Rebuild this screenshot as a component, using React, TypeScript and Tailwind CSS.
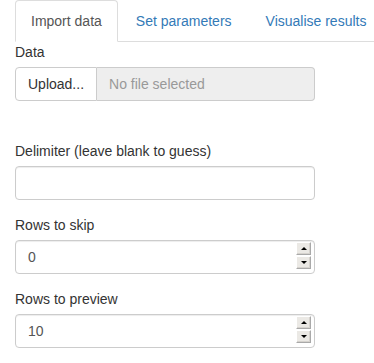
const font = { fontFamily: '"Liberation Sans", Arial, sans-serif' };

function Spinner() {
  return (
    <div className="absolute right-[3px] top-[1px] flex flex-col gap-px">
      <div className="flex h-[13px] w-[15px] items-center justify-center border border-[#a9a9a9] border-l-white border-t-white bg-[#ebe9e5] shadow-[inset_-1px_-1px_0_#d6d3ce]">
        <span className="block h-0 w-0 border-x-[3px] border-b-[3px] border-x-transparent border-b-black" />
      </div>
      <div className="flex h-[13px] w-[15px] items-center justify-center border border-[#a9a9a9] border-l-white border-t-white bg-[#ebe9e5] shadow-[inset_-1px_-1px_0_#d6d3ce]">
        <span className="block h-0 w-0 border-x-[3px] border-t-[3px] border-x-transparent border-t-black" />
      </div>
    </div>
  );
}

function Field({ label, value, number }: { label: string; value?: string; number?: boolean }) {
  return (
    <div className="mb-[15px]">
      <div className="mb-[5px] text-[14px] leading-[20px] text-[#333]">{label}</div>
      <div className="relative h-[34px] w-[300px] rounded-[4px] border border-[#ccc] bg-white px-[12px] py-[6px] text-[14px] leading-[20px] text-[#555] shadow-[inset_0_1px_1px_rgba(0,0,0,0.075)]">
        {value}
        {number && <Spinner />}
      </div>
    </div>
  );
}

export default function App() {
  return (
    <div className="h-[363px] w-[374px] overflow-hidden bg-white pl-[15px]" style={font}>
      <div className="flex border-b border-[#ddd] text-[14px] leading-[20px] whitespace-nowrap">
        <div className="-mb-px mr-[2px] shrink-0 rounded-t-[4px] border border-[#ddd] border-b-transparent bg-white px-[15px] py-[10px] text-[#555]">
          Import data
        </div>
        <div className="-mb-px mr-[2px] shrink-0 border border-transparent px-[15px] py-[10px] text-[#337ab7]">
          Set parameters
        </div>
        <div className="-mb-px shrink-0 border border-transparent px-[15px] py-[10px] text-[#337ab7]">
          Visualise results
        </div>
      </div>

      <div className="mb-[40px]">
        <div className="mb-[5px] text-[14px] leading-[20px] text-[#333]">Data</div>
        <div className="flex h-[34px] w-[300px] text-[14px] leading-[20px]">
          <div className="rounded-l-[4px] border border-[#ccc] bg-white px-[12px] py-[6px] text-[#333]">
            Upload...
          </div>
          <div className="flex-1 rounded-r-[4px] border border-l-0 border-[#ccc] bg-[#eee] px-[12px] py-[6px] text-[#999]">
            No file selected
          </div>
        </div>
      </div>

      <Field label="Delimiter (leave blank to guess)" />
      <Field label="Rows to skip" value="0" number />
      <Field label="Rows to preview" value="10" number />
    </div>
  );
}
